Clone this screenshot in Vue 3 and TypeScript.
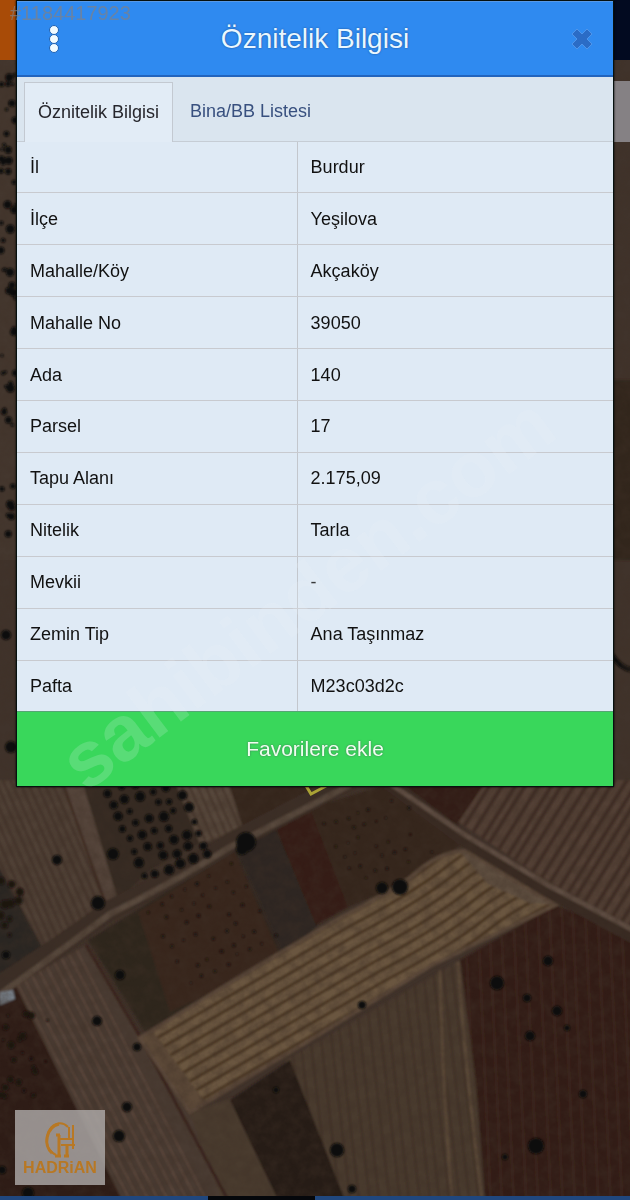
<script setup lang="ts">
import { ref } from 'vue'

interface Attribute {
  label: string
  value: string
}
interface Dot {
  x: number
  y: number
  r: number
}
interface Field {
  id: string
  shape: string
  fill: string
  line: string
  width: number
  furrows: string
}

const attributes: Attribute[] = [
  { label: 'İl', value: 'Burdur' },
  { label: 'İlçe', value: 'Yeşilova' },
  { label: 'Mahalle/Köy', value: 'Akçaköy' },
  { label: 'Mahalle No', value: '39050' },
  { label: 'Ada', value: '140' },
  { label: 'Parsel', value: '17' },
  { label: 'Tapu Alanı', value: '2.175,09' },
  { label: 'Nitelik', value: 'Tarla' },
  { label: 'Mevkii', value: '-' },
  { label: 'Zemin Tip', value: 'Ana Taşınmaz' },
  { label: 'Pafta', value: 'M23c03d2c' },
]

const tabs = ['Öznitelik Bilgisi', 'Bina/BB Listesi']
const activeTab = ref(0)

// Deterministic pseudo-random values keep the scenery stable between renders.
let seed = 41
function rnd(): number {
  seed = (seed * 16807) % 2147483647
  return seed / 2147483647
}

// Parallel furrows through (x, y), stepped sideways by (sx, sy), each running along (lx, ly).
function furrows(x: number, y: number, sx: number, sy: number, lx: number, ly: number, count: number): string {
  let d = ''
  for (let i = 0; i < count; i++) {
    const j = rnd() * 1.5
    d += `M${x + i * sx + j} ${y + i * sy + j}l${lx} ${ly}`
  }
  return d
}

const fields: Field[] = [
  { id: 'west', shape: 'M-5 780H60L112 912L45 950L-5 860Z', fill: '#4f3f35', line: '#43332a', width: 2, furrows: furrows(-90, 770, 8, 0, 85, 190, 22) },
  { id: 'north', shape: 'M174 780H228L243 828L200 845Z', fill: '#56463a', line: '#46372d', width: 2, furrows: furrows(160, 775, 8, 0, 35, 80, 10) },
  { id: 'east', shape: 'M458 822L487 780H635V940Z', fill: '#523f34', line: '#412e26', width: 4, furrows: furrows(475, 770, 12, 0, -110, 175, 26) },
  { id: 'red', shape: 'M460 960L555 905L635 937V1200H485L475 1080Z', fill: '#321e18', line: '#3a231b', width: 3, furrows: furrows(440, 900, 12, 0, 14, 310, 17) },
  { id: 'mid', shape: 'M285 1060L460 960L476 1080L485 1200H345Z', fill: '#483a2f', line: '#413227', width: 2, furrows: furrows(270, 950, 10, 0, 30, 260, 22) },
  { id: 'south', shape: 'M15 985L86 945L142 1040L190 1112L228 1200H120Z', fill: '#4a3a30', line: '#5b483c', width: 2, furrows: furrows(10, 970, 8, -3, 130, 250, 9) },
]
const mainFurrows = Array.from({ length: 24 }, (_, i) => {
  const x = 126 + i * 6
  const y = 1006 + i * 9
  return `M${x} ${y}L${x + 200} ${y - 116}Q${x + 265} ${y - 150} ${x + 300} ${y - 178}T${x + 430} ${y - 245}`
}).join('')

const orchard = grove(108, 792, 6, 8, [13, -4], [5, 12], 4, 0.92)
const saplings = grove(149, 912, 8, 7, [12, -7], [7, 12], 1.5, 0.75)
const shrubs = grove(325, 825, 8, 6, [11, -4], [6, 11], 1.4, 0.6)
const margin = scatter(0, 65, 16, 470, 55, 3)
const lowerLeft = scatter(0, 1010, 48, 90, 22, 2.6)
const westEdge = scatter(0, 880, 20, 80, 10, 3)

function grove(x: number, y: number, cols: number, rows: number, dx: number[], dy: number[], r: number, keep: number): Dot[] {
  const dots: Dot[] = []
  for (let i = 0; i < cols; i++) {
    for (let j = 0; j < rows; j++) {
      if (rnd() > keep) continue
      dots.push({
        x: x + i * dx[0] + j * dy[0] + rnd() * 4 - 2,
        y: y + i * dx[1] + j * dy[1] + rnd() * 4 - 2,
        r: r * (0.7 + rnd() * 0.6),
      })
    }
  }
  return dots
}

function scatter(x: number, y: number, w: number, h: number, count: number, r: number): Dot[] {
  return Array.from({ length: count }, () => ({
    x: x + rnd() * w,
    y: y + rnd() * h,
    r: r * (0.5 + rnd()),
  }))
}

const trees: Dot[] = [
  { x: 246, y: 842, r: 10 }, { x: 242, y: 849, r: 6 }, { x: 98, y: 903, r: 7 },
  { x: 113, y: 854, r: 6 }, { x: 57, y: 860, r: 5 }, { x: 382, y: 888, r: 6 },
  { x: 400, y: 887, r: 8 }, { x: 120, y: 975, r: 5 }, { x: 97, y: 1021, r: 5 },
  { x: 137, y: 1047, r: 4 }, { x: 127, y: 1107, r: 5 }, { x: 119, y: 1136, r: 6 },
  { x: 362, y: 1005, r: 4 }, { x: 337, y: 1150, r: 7 }, { x: 352, y: 1189, r: 4 },
  { x: 497, y: 983, r: 7 }, { x: 548, y: 961, r: 5 }, { x: 527, y: 998, r: 4 },
  { x: 557, y: 1011, r: 5 }, { x: 530, y: 1036, r: 5 }, { x: 567, y: 1028, r: 3 },
  { x: 583, y: 1094, r: 4 }, { x: 536, y: 1146, r: 8 }, { x: 505, y: 1157, r: 3 },
  { x: 276, y: 1090, r: 3 }, { x: 28, y: 1193, r: 6 }, { x: 2, y: 1170, r: 4 },
  { x: 6, y: 955, r: 4 }, { x: 6, y: 635, r: 5 }, { x: 11, y: 747, r: 6 },
]
</script>

<template>
  <main class="page">
    <svg class="map" viewBox="0 0 630 1200" preserveAspectRatio="xMidYMin slice" aria-hidden="true">
      <defs>
        <filter id="grain" x="0" y="0" width="100%" height="100%">
          <feTurbulence type="fractalNoise" baseFrequency="0.09" numOctaves="4" seed="7" />
          <feColorMatrix values="0 0 0 0 0.05  0 0 0 0 0.03  0 0 0 0 0.02  1.5 0 0 0 -0.48" />
        </filter>
        <filter id="soft"><feGaussianBlur stdDeviation="0.8" /></filter>
        <clipPath v-for="f in fields" :id="'clip-' + f.id" :key="f.id"><path :d="f.shape" /></clipPath>
        <clipPath id="clip-main">
          <path d="M140 1038Q250 970 340 918Q390 892 410 878Q440 850 467 851L555 905L430 966L310 1040L190 1112Z" />
        </clipPath>
      </defs>

      <rect width="630" height="1200" fill="#40332b" />
      <rect y="60" width="20" height="500" fill="#44372e" />
      <g filter="url(#soft)">
        <rect x="610" y="380" width="30" height="180" fill="#30251f" />
        <polygon points="-5,860 42,948 -5,985" fill="#2b2620" />
        <polygon points="55,780 84,780 130,900 108,908" fill="#54443a" />
        <polygon points="82,780 176,780 200,843 150,870 118,900" fill="#352a22" />
        <polygon points="228,780 350,780 243,830" fill="#35261f" />
        <polygon points="88,940 235,850 285,960 210,995 145,1032" fill="#2f251f" />
        <polygon points="138,912 235,852 282,960 170,1012" fill="#38281f" />
        <polygon points="235,848 275,826 318,925 284,957" fill="#2f2720" />
        <polygon points="275,826 312,808 352,905 316,925" fill="#351e17" />
        <polygon points="310,808 385,785 465,842 410,882 348,907" fill="#36271f" />
        <polygon points="393,785 487,785 458,825" fill="#311d17" />
        <g v-for="f in fields" :key="f.id" :clip-path="`url(#clip-${f.id})`">
          <path :d="f.shape" :fill="f.fill" />
          <path :d="f.furrows" :stroke="f.line" :stroke-width="f.width" fill="none" />
        </g>
        <path d="M62 780L106 905" stroke="#3b271f" stroke-width="2" />
        <path d="M440 970Q442 1080 452 1200M458 962Q466 1080 482 1200" stroke="#5b4939" stroke-width="3" fill="none" />
        <polygon points="190,1112 232,1098 282,1200 222,1200" fill="#493b2f" />
        <polygon points="230,1100 290,1060 345,1200 278,1200" fill="#281f18" />
        <path d="M86 945L142 1040L228 1200" stroke="#38241d" stroke-width="3" fill="none" />
        <polygon points="-5,985 15,985 122,1200 -5,1200" fill="#2e1d18" />
        <g clip-path="url(#clip-main)">
          <rect x="130" y="840" width="440" height="280" fill="#6a563f" />
          <path :d="mainFurrows" stroke="#493624" stroke-width="3" fill="none" />
          <path d="M140 1038L152 1030L206 1103L190 1112Z" fill="#5c4a39" />
          <path d="M455 846L475 848L560 905L530 903L488 884Z" fill="#5f4f41" />
        </g>
        <path d="M140 1038Q250 970 340 918Q390 892 410 878Q440 850 467 851L555 905L430 966L310 1040L190 1112Z" fill="none" stroke="#5c4a3a" stroke-width="4" />
        <path d="M-5 988Q55 950 110 910Q180 875 230 843L350 780" stroke="#3b2d25" stroke-width="20" fill="none" />
        <path d="M-5 998Q55 955 110 914Q180 879 230 847L350 785" stroke="#58483d" stroke-width="6" fill="none" />
        <path d="M388 782L465 840L548 890L635 937" stroke="#382921" stroke-width="15" fill="none" />
        <path d="M385 780L465 835L548 885L635 931" stroke="#5e4e43" stroke-width="5" fill="none" />
        <polygon points="0,992 13,990 15,999 0,1005" fill="#78818b" />
        <path d="M612 655Q620 668 632 670" stroke="#100d0a" stroke-width="5" fill="none" />
      </g>
      <rect width="630" height="1200" filter="url(#grain)" opacity="0.5" />
      <g filter="url(#soft)" fill="#0d0b09">
        <circle v-for="(d, i) in [...orchard, ...margin, ...trees]" :key="'t' + i" :cx="d.x" :cy="d.y" :r="d.r" />
        <g fill="#1c120e">
          <circle v-for="(d, i) in [...saplings, ...shrubs, ...lowerLeft, ...westEdge]" :key="'s' + i" :cx="d.x" :cy="d.y" :r="d.r" />
        </g>
      </g>
      <path d="M305 784L311 794L326 786" stroke="#aaa235" stroke-width="3" fill="none" />
      <rect width="16" height="60" fill="#a84b07" />
      <rect x="16" width="614" height="60" fill="#020a20" />
      <rect x="614" y="81" width="16" height="61" fill="#858184" />
      <rect y="1196" width="630" height="4" fill="#20477e" />
      <rect x="208" y="1196" width="107" height="4" fill="#05070b" />
    </svg>

    <section class="dialog" aria-labelledby="dialog-title">
      <header class="bar">
        <button class="icon" type="button" aria-label="Menü">
          <svg width="14" height="32" viewBox="0 0 14 32" fill="#f2fbff" stroke="#1f62b3" stroke-width="1">
            <circle cx="7" cy="7" r="4.5" /><circle cx="7" cy="16" r="4.5" /><circle cx="7" cy="25" r="4.5" />
          </svg>
        </button>
        <h1 id="dialog-title">Öznitelik Bilgisi</h1>
        <button class="icon close" type="button" aria-label="Kapat">
          <svg width="22" height="22" viewBox="0 0 22 22">
            <path d="M6 1L11 6L16 1L21 6L16 11L21 16L16 21L11 16L6 21L1 16L6 11L1 6Z" fill="#2b6cc6" stroke="#4f95ea" stroke-width="1" />
          </svg>
        </button>
      </header>

      <div class="tabs" role="tablist">
        <button
          v-for="(tab, i) in tabs"
          :key="tab"
          type="button"
          role="tab"
          class="tab"
          :class="{ active: activeTab === i }"
          :aria-selected="activeTab === i"
          @click="activeTab = i"
        >{{ tab }}</button>
      </div>

      <table class="attributes">
        <tbody>
          <tr v-for="row in attributes" :key="row.label">
            <th scope="row">{{ row.label }}</th>
            <td>{{ row.value }}</td>
          </tr>
        </tbody>
      </table>

      <button class="favorite" type="button">Favorilere ekle</button>
    </section>

    <div class="logo">
      <svg viewBox="0 0 90 75" role="img" aria-label="Hadrian">
        <g fill="none" stroke="#b87824">
          <path d="M53 17C47 11 39 13 35 19C29 28 31 40 41 45" stroke-width="2" />
          <path d="M44 14C31 17 28 36 37 43" stroke-width="3" />
          <path d="M44 46V25M40 46H46M41 25H45" stroke-width="3" />
          <path d="M45 29H59M46 35H60" stroke-width="2" />
          <path d="M58 15V39M54 17V28" stroke-width="2" />
          <path d="M52 35V46M49 46H54" stroke-width="3" />
        </g>
        <text x="45" y="63" text-anchor="middle">HADRiAN</text>
      </svg>
    </div>

    <svg class="watermark" viewBox="0 0 630 1200" preserveAspectRatio="xMidYMin slice" aria-hidden="true">
      <text class="site" transform="translate(86 793) rotate(-37)">sahibinden.com</text>
      <text class="listing" x="10" y="20">#1184417923</text>
    </svg>
  </main>
</template>

<style>
body {
  margin: 0;
  background: #40332b;
}
</style>

<style scoped>
.page {
  position: relative;
  box-sizing: border-box;
  min-height: 100vh;
  padding: 0 16px;
  overflow: hidden;
  font-family: "Liberation Sans", Arial, sans-serif;
}
.map,
.watermark {
  position: absolute;
  inset: 0;
  width: 100%;
  height: 100%;
}
.watermark {
  pointer-events: none;
}
.site {
  font-size: 78px;
  font-weight: 700;
  fill: rgba(238, 243, 250, 0.18);
}
.listing {
  font-size: 20px;
  fill: rgba(128, 128, 132, 0.7);
}
.dialog {
  position: relative;
  border: 1px solid #06110f;
  background: #dfeaf5;
  box-shadow: 0 0 2px #000;
}
button {
  margin: 0;
  border: 0;
  background: none;
  font-family: inherit;
  cursor: pointer;
}
.bar {
  display: flex;
  align-items: center;
  justify-content: space-between;
  box-sizing: border-box;
  height: 76px;
  padding: 0 15px;
  background: #2f8af0;
  border-top: 1px solid #5799e8;
  border-bottom: 2px solid #2264bd;
}
.icon {
  display: flex;
  align-items: center;
  justify-content: center;
  width: 44px;
  height: 44px;
  padding: 0;
}
.icon.close {
  justify-content: flex-end;
  padding-right: 5px;
}
.bar h1 {
  margin: 0;
  color: #eaf7ff;
  font-size: 28px;
  line-height: 32px;
  font-weight: 400;
  text-shadow: 0 0 2px #174b8d;
}
.tabs {
  display: flex;
  box-sizing: border-box;
  height: 65px;
  padding: 5px 7px 0;
  background: #dae5ef;
  border-bottom: 1px solid #c6cdd5;
}
.tab {
  padding: 0 17px;
  color: #38507f;
  font-size: 18px;
}
.tab.active {
  margin-bottom: -1px;
  padding: 0 13px;
  border: 1px solid #c3c9d1;
  border-bottom: 0;
  background: #e2ecf6;
  color: #26262c;
}
.attributes {
  width: 100%;
  height: 569px;
  border-collapse: collapse;
  table-layout: fixed;
  color: #111;
  font-size: 18px;
  line-height: 22px;
}
.attributes th,
.attributes td {
  padding: 0 13px;
  border-bottom: 1px solid #c8cacf;
  font-weight: 400;
  text-align: left;
}
.attributes tr:last-child > * {
  border-bottom: 0;
}
.attributes th {
  width: 47%;
  box-sizing: border-box;
  border-right: 1px solid #c3c7cd;
}
.favorite {
  display: block;
  width: 100%;
  height: 75px;
  border-top: 1px solid #55a574;
  background: #39d75b;
  color: #f0fff0;
  font-size: 21px;
  text-shadow: 0 0 2px #47705a;
}
.logo {
  position: absolute;
  left: 15px;
  bottom: 15px;
  width: 90px;
  background: rgba(176, 173, 171, 0.8);
}
.logo svg {
  display: block;
  width: 100%;
}
.logo text {
  fill: #b87824;
  font-size: 16px;
  font-weight: 700;
}
</style>
